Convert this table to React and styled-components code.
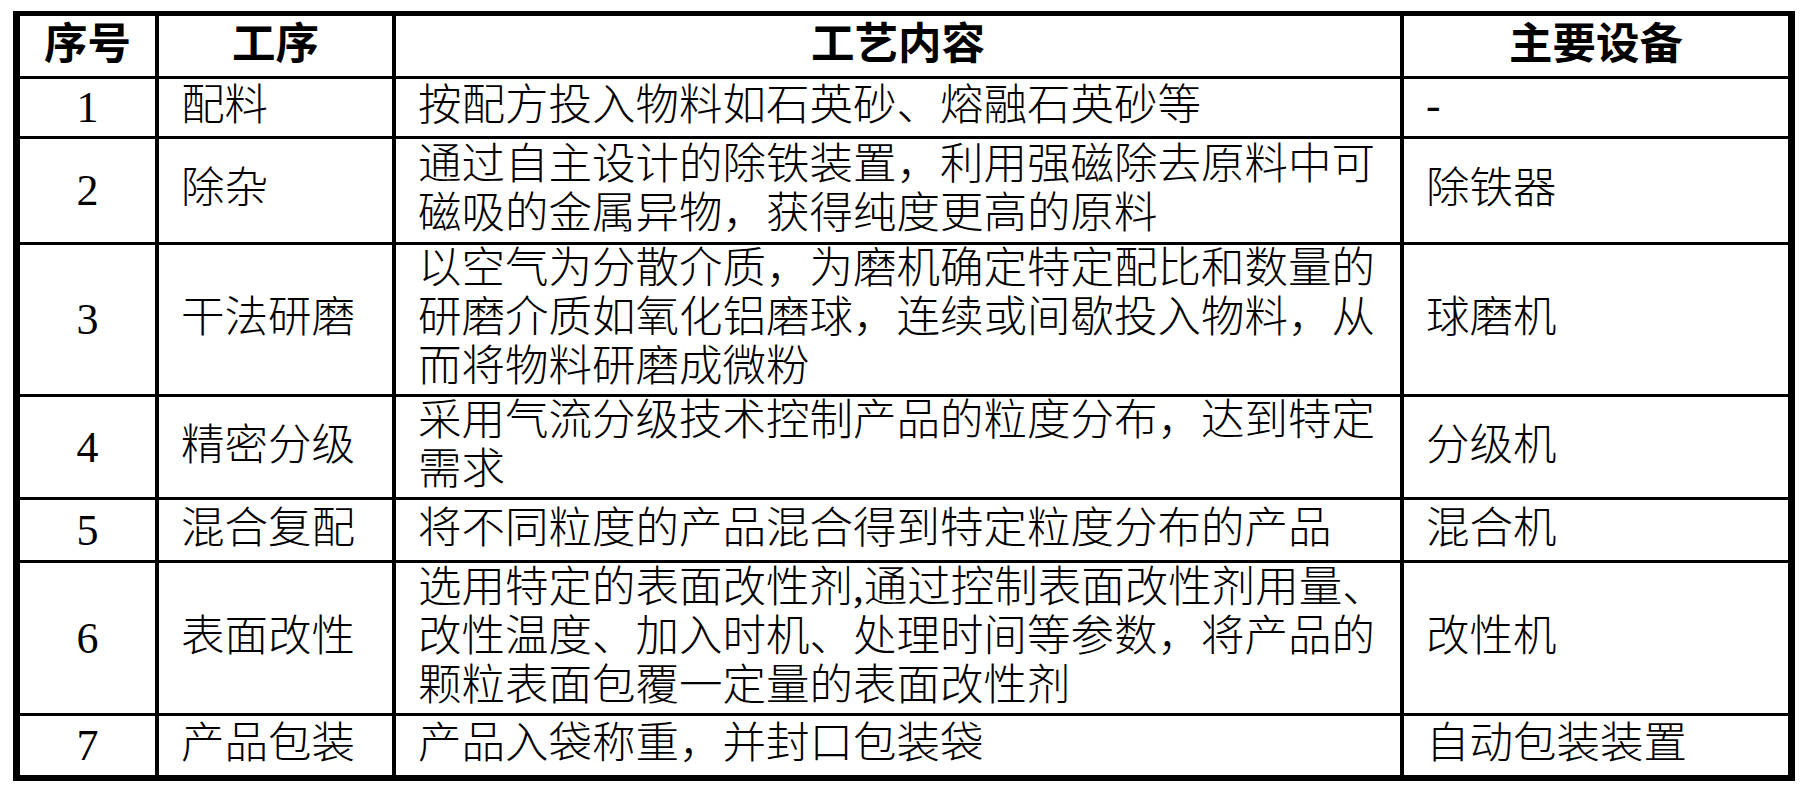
import React from 'react';
import styled, { createGlobalStyle } from 'styled-components';

const GlobalStyle = createGlobalStyle`
    html, body {
        margin: 0;
        padding: 0;
        background: #fff;
    }
`;

const Page = styled.div`
    padding: 11px 0 0 13px;
    font-family: "Liberation Serif", "Noto Sans CJK SC", serif;
    color: #000;
`;

// 表格外框 + 网格线
const Table = styled.div`
    display: grid;
    width: max-content;
    grid-template-columns: 135px 233px 1004px 384px;
    grid-template-rows: 60px 57px 103px 149px 100px 60px 150px 59px;
    gap: 3px 4px;
    background: #000;
    border-style: solid;
    border-color: #000;
    border-width: 5px 7px 6px 7px;
`;

const Cell = styled.div`
    display: flex;
    flex-direction: column;
    justify-content: center;
    align-items: ${(p) => (p.$center ? 'center' : 'flex-start')};
    padding: 0 0 ${(p) => (p.$num ? 0 : 4)}px ${(p) => (p.$center ? 0 : 22)}px;
    background: #fff;
    font-size: ${(p) => (p.$num ? 44 : 43.5)}px;
    line-height: 49px;
    font-weight: ${(p) => (p.$head ? 700 : 300)};
    white-space: nowrap;
`;

const Line = styled.span`
    display: block;
`;

const rows = [
    { no: '1', step: '配料', lines: ['按配方投入物料如石英砂、熔融石英砂等'], equip: '-' },
    {
        no: '2',
        step: '除杂',
        lines: ['通过自主设计的除铁装置，利用强磁除去原料中可', '磁吸的金属异物，获得纯度更高的原料'],
        equip: '除铁器',
    },
    {
        no: '3',
        step: '干法研磨',
        lines: [
            '以空气为分散介质，为磨机确定特定配比和数量的',
            '研磨介质如氧化铝磨球，连续或间歇投入物料，从',
            '而将物料研磨成微粉',
        ],
        equip: '球磨机',
    },
    {
        no: '4',
        step: '精密分级',
        lines: ['采用气流分级技术控制产品的粒度分布，达到特定', '需求'],
        equip: '分级机',
    },
    { no: '5', step: '混合复配', lines: ['将不同粒度的产品混合得到特定粒度分布的产品'], equip: '混合机' },
    {
        no: '6',
        step: '表面改性',
        lines: [
            '选用特定的表面改性剂,通过控制表面改性剂用量、',
            '改性温度、加入时机、处理时间等参数，将产品的',
            '颗粒表面包覆一定量的表面改性剂',
        ],
        equip: '改性机',
    },
    { no: '7', step: '产品包装', lines: ['产品入袋称重，并封口包装袋'], equip: '自动包装装置' },
];

export default function App() {
    return (
        <>
            <GlobalStyle />
            <Page>
                <Table>
                    <Cell $center $head>序号</Cell>
                    <Cell $center $head>工序</Cell>
                    <Cell $center $head>工艺内容</Cell>
                    <Cell $center $head>主要设备</Cell>
                    {rows.map((r) => (
                        <React.Fragment key={r.no}>
                            <Cell $center $num>{r.no}</Cell>
                            <Cell>{r.step}</Cell>
                            <Cell>
                                {r.lines.map((l, i) => (
                                    <Line key={i}>{l}</Line>
                                ))}
                            </Cell>
                            <Cell>{r.equip}</Cell>
                        </React.Fragment>
                    ))}
                </Table>
            </Page>
        </>
    );
}
